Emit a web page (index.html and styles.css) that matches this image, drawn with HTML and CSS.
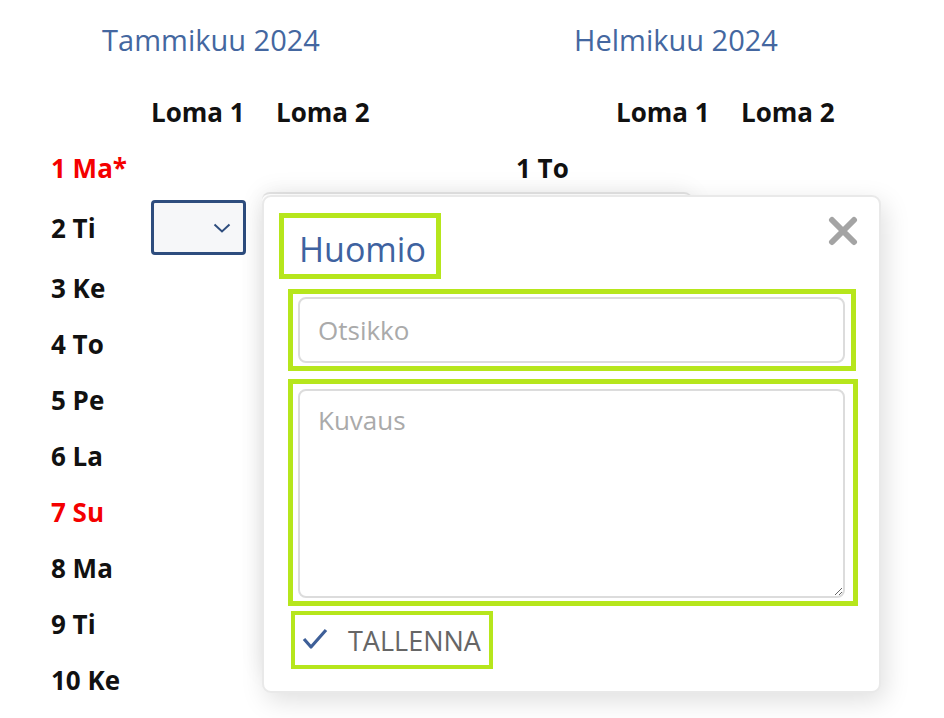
FILE: index.html
```html
<!DOCTYPE html>
<html lang="fi">
<head>
<meta charset="utf-8">
<title>Kalenteri</title>
<link rel="stylesheet" href="styles.css">
</head>
<body>
<div class="calendar">
  <section class="month">
    <h2 class="month-title">Tammikuu 2024</h2>
    <div class="grid">
      <div class="row head"><span class="day"></span><span class="col1">Loma 1</span><span class="col2">Loma 2</span></div>
      <div class="row"><span class="day red">1 Ma*</span><span class="col1"></span><span class="col2"></span></div>
      <div class="row tall"><span class="day">2 Ti</span><span class="col1"><span class="select"><svg class="chev" width="18" height="10" viewBox="0 0 18 10"><polyline points="1.5,1.5 9,8.5 16.5,1.5" fill="none" stroke="#2e4d7e" stroke-width="2"/></svg></span></span><span class="col2"></span></div>
      <div class="row"><span class="day">3 Ke</span></div>
      <div class="row"><span class="day">4 To</span></div>
      <div class="row"><span class="day">5 Pe</span></div>
      <div class="row"><span class="day">6 La</span></div>
      <div class="row"><span class="day red">7 Su</span></div>
      <div class="row"><span class="day">8 Ma</span></div>
      <div class="row"><span class="day">9 Ti</span></div>
      <div class="row"><span class="day">10 Ke</span></div>
    </div>
  </section>
  <section class="month">
    <h2 class="month-title">Helmikuu 2024</h2>
    <div class="grid">
      <div class="row head"><span class="day"></span><span class="col1">Loma 1</span><span class="col2">Loma 2</span></div>
      <div class="row"><span class="day">1 To</span></div>
    </div>
  </section>
</div>

<div class="ghost"></div>
<div class="dialog">
  <button class="close" aria-label="Sulje"><svg width="30" height="30" viewBox="0 0 30 30"><path d="M4 4 L26 26 M26 4 L4 26" stroke="#a4a4a4" stroke-width="6" stroke-linecap="round"/></svg></button>
  <div class="hl title-box"><h3 class="dialog-title">Huomio</h3></div>
  <div class="hl field-box"><input class="input" type="text" placeholder="Otsikko"></div>
  <div class="hl area-box"><textarea class="area" placeholder="Kuvaus"></textarea></div>
  <div class="hl save-box"><button class="save"><svg class="check" width="26" height="22" viewBox="0 0 26 22"><polyline points="2,11 9,19 24,2" fill="none" stroke="#3e5f98" stroke-width="3.2" stroke-linejoin="round"/></svg><span>TALLENNA</span></button></div>
</div>
</body>
</html>
```
FILE: styles.css
```css
* { box-sizing: border-box; }
html, body { margin: 0; padding: 0; background: #fff; }
body {
  font-family: "Open Sans", "Noto Sans", sans-serif;
  width: 944px;
  height: 718px;
  overflow: hidden;
  position: relative;
}
.calendar { display: flex; }
.month { width: 465px; padding-left: 51px; }
.month-title {
  width: 320px;
  margin: 0;
  padding-top: 20px;
  height: 84px;
  text-align: center;
  font-size: 29px;
  font-weight: 500;
  line-height: 39px;
  color: #4467a0;
}
.grid { width: 320px; }
.row {
  display: grid;
  grid-template-columns: 100px 125px 95px;
  height: 56px;
  align-items: center;
  font-size: 26px;
  font-weight: 700;
  color: #111;
}
.row.tall { height: 64px; }
.row.head { font-size: 26px; }
.red { color: #f40000; }
.select {
  display: flex;
  align-items: center;
  justify-content: flex-end;
  width: 95px;
  height: 55px;
  margin-top: -2px;
  border: 3px solid #2e4d7e;
  border-radius: 4px;
  background: #f6f7f9;
  padding-right: 12px;
}
.chev { display: block; margin-top: 2px; }
.ghost {
  position: absolute;
  left: 262px;
  top: 192px;
  width: 430px;
  height: 480px;
  border-radius: 8px;
  background: #fff;
  border-top: 2px solid #e2e2e2;
  box-shadow: 0 0 24px rgba(0,0,0,0.08);
}
.dialog {
  position: absolute;
  left: 262px;
  top: 195px;
  width: 619px;
  height: 498px;
  background: #fff;
  border: 2px solid #e9e9e9;
  border-radius: 9px;
  box-shadow: 4px 8px 26px rgba(0,0,0,0.13);
  padding: 16px 0 0 15px;
  display: flex;
  flex-direction: column;
  align-items: flex-start;
}
.close {
  position: absolute;
  right: 21px;
  top: 19px;
  border: 0;
  background: none;
  padding: 0;
  width: 30px;
  height: 30px;
}
.close svg { display: block; }
.hl { border: 5px solid #b6e61c; }
.title-box {
  width: 162px;
  height: 66px;
  padding: 11px 0 0 15px;
}
.dialog-title {
  margin: 0;
  font-size: 34px;
  font-weight: 500;
  line-height: 40px;
  color: #3e62a0;
}
.field-box {
  margin: 10px 0 0 9px;
  width: 568px;
  height: 82px;
  padding: 3px 6px 3px 5px;
}
.input, .area {
  display: block;
  width: 547px;
  border: 2px solid #dcdcdc;
  border-radius: 8px;
  font-family: "Open Sans", sans-serif;
  font-size: 26px;
  color: #333;
  padding: 0 18px;
  outline: none;
  background: #fff;
}
.input { height: 66px; }
.area-box {
  margin: 8px 0 0 9px;
  width: 570px;
  height: 227px;
  padding: 5px 8px 3px 5px;
}
.area { height: 209px; padding-top: 11px; resize: vertical; }
.input::placeholder, .area::placeholder { color: #aaa; }
.save-box {
  margin: 5px 0 0 12px;
  width: 202px;
  height: 58px;
  border-width: 4px;
  padding: 0 0 0 7px;
  display: flex;
  align-items: center;
}
.save {
  display: flex;
  align-items: center;
  gap: 20px;
  border: 0;
  background: none;
  padding: 0;
  font-family: "Open Sans", sans-serif;
  font-size: 27px;
  font-weight: 500;
  color: #666;
}
.check { display: block; margin-top: -2px; }
```
